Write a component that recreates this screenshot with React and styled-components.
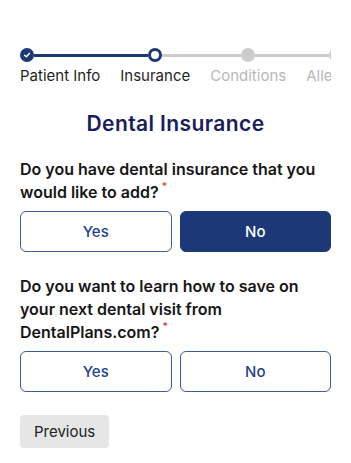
import React from "react";
import styled, { createGlobalStyle } from "styled-components";

const Global = createGlobalStyle`
  html, body { margin: 0; padding: 0; background: #fff; }
  body { font-family: Inter, "Open Sans", Arial, sans-serif; -webkit-font-smoothing: antialiased; }
  * { box-sizing: border-box; }
`;

const NAVY = "#1c3876";
const GRAY = "#cccccc";

const Page = styled.div`
  width: 351px;
  padding: 48px 20px 0;
`;

const Stepper = styled.div`
  width: 311px;
  overflow: hidden;
`;

const Track = styled.div`
  display: flex;
  align-items: center;
  height: 14px;
  width: 400px;
`;

const Dot = styled.div`
  flex: none;
  width: 14px;
  height: 14px;
  border-radius: 50%;
  display: flex;
  align-items: center;
  justify-content: center;
  background: ${(p) => (p.$state === "done" ? NAVY : p.$state === "current" ? "#fff" : GRAY)};
  border: ${(p) => (p.$state === "current" ? `3px solid ${NAVY}` : "none")};
`;

const Segment = styled.div`
  flex: none;
  width: ${(p) => p.$w}px;
  height: 3px;
  background: ${(p) => (p.$active ? NAVY : GRAY)};
`;

const Labels = styled.div`
  display: flex;
  gap: 20px;
  margin-top: 4px;
  white-space: nowrap;
`;

const Label = styled.span`
  font-size: 15px;
  line-height: 20px;
  color: ${(p) => (p.$muted ? "#b8b8b8" : "#1f1f1f")};
`;

const Heading = styled.h1`
  margin: 24px 0 0;
  text-align: center;
  font-size: 21px;
  line-height: 28px;
  font-weight: 600;
  letter-spacing: 0.4px;
  color: #17205a;
`;

const Question = styled.p`
  margin: ${(p) => p.$top}px 0 0;
  font-size: 16px;
  line-height: 23px;
  font-weight: 600;
  color: #161616;
`;

const Req = styled.span`
  display: inline-block;
  color: #e53935;
  font-size: 10px;
  line-height: 10px;
  margin-left: 3px;
  vertical-align: 8px;
`;

const Choices = styled.div`
  display: grid;
  grid-template-columns: 1fr 1fr;
  gap: 8px;
  margin-top: 7px;
`;

const Choice = styled.button`
  height: 41px;
  border-radius: 6px;
  border: 1.5px solid ${(p) => (p.$selected ? NAVY : "#3d5b98")};
  background: ${(p) => (p.$selected ? NAVY : "#fff")};
  color: ${(p) => (p.$selected ? "#fff" : "#24438a")};
  font-family: inherit;
  font-size: 15px;
  font-weight: 500;
  cursor: pointer;
`;

const Prev = styled.button`
  margin-top: 23px;
  height: 33px;
  padding: 0 14px;
  border: none;
  border-radius: 4px;
  background: #e6e6e6;
  color: #222;
  font-family: inherit;
  font-size: 15px;
  cursor: pointer;
`;

const Check = () => (
  <svg width="8" height="8" viewBox="0 0 10 10">
    <path d="M2 5.2 L4.2 7.3 L8 3" fill="none" stroke="#fff" strokeWidth="1.8" strokeLinecap="round" strokeLinejoin="round" />
  </svg>
);

export default function App() {
  return (
    <Page>
      <Global />
      <Stepper>
        <Track>
          <Dot $state="done"><Check /></Dot>
          <Segment $active $w={114} />
          <Dot $state="current" />
          <Segment $w={79} />
          <Dot $state="todo" />
          <Segment $w={74} />
          <Dot $state="todo" />
        </Track>
        <Labels>
          <Label>Patient Info</Label>
          <Label>Insurance</Label>
          <Label $muted>Conditions</Label>
          <Label $muted>Allergies</Label>
        </Labels>
      </Stepper>
      <Heading>Dental Insurance</Heading>
      <Question $top={20}>
        Do you have dental insurance that you would like to add?<Req>*</Req>
      </Question>
      <Choices>
        <Choice>Yes</Choice>
        <Choice $selected>No</Choice>
      </Choices>
      <Question $top={23}>
        Do you want to learn how to save on your next dental visit from DentalPlans.com?<Req>*</Req>
      </Question>
      <Choices>
        <Choice>Yes</Choice>
        <Choice>No</Choice>
      </Choices>
      <Prev>Previous</Prev>
    </Page>
  );
}
